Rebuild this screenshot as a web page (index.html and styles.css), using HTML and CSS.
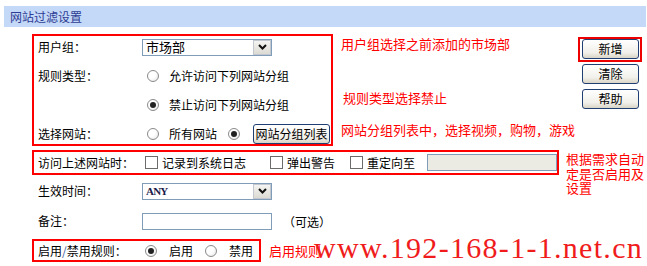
FILE: index.html
```html
<!DOCTYPE html>
<html lang="zh-CN">
<head>
  <meta charset="UTF-8">
  <title>网站过滤设置</title>
  <link rel="stylesheet" href="styles.css">
</head>
<body>

  <div class="title">网站过滤设置</div>

  <div class="page">

    <!-- 用户组 / 规则类型 / 选择网站 -->
    <div class="top">
      <div class="box box-main">
        <div class="row">
          <span class="label">用户组：</span>
          <div class="select">
            <span class="select-text">市场部</span>
            <span class="select-btn"><svg width="9" height="6" viewBox="0 0 9 6"><path d="M1 1 L4.5 4.5 L8 1" fill="none" stroke="#111" stroke-width="2"/></svg></span>
          </div>
        </div>
        <div class="row">
          <span class="label">规则类型：</span>
          <input class="radio" type="radio" name="rule">
          <span class="opt-text">允许访问下列网站分组</span>
        </div>
        <div class="row">
          <span class="label"></span>
          <input class="radio" type="radio" name="rule" checked>
          <span class="opt-text">禁止访问下列网站分组</span>
        </div>
        <div class="row">
          <span class="label">选择网站：</span>
          <input class="radio" type="radio" name="site">
          <span class="opt-text">所有网站</span>
          <input class="radio radio-2" type="radio" name="site" checked>
          <button class="btn btn-list">网站分组列表</button>
        </div>
      </div>

      <div class="notes">
        <p class="note note-1">用户组选择之前添加的市场部</p>
        <p class="note note-2">规则类型选择禁止</p>
        <p class="note note-3">网站分组列表中，选择视频，购物，游戏</p>
      </div>

      <div class="actions">
        <div class="mark"><button class="btn">新增</button></div>
        <button class="btn btn-side">清除</button>
        <button class="btn btn-side">帮助</button>
      </div>
    </div>

    <!-- 访问上述网站时 / 生效时间 / 备注 -->
    <div class="mid">
      <div class="mid-left">
        <div class="box box-visit">
          <span class="label">访问上述网站时：</span>
          <span class="check cb-1"></span><span class="cb-text">记录到系统日志</span>
          <span class="check cb-2"></span><span class="cb-text">弹出警告</span>
          <span class="check cb-3"></span><span class="cb-text">重定向至</span>
          <span class="input input-off"></span>
        </div>
        <div class="row row-time">
          <span class="label">生效时间：</span>
          <div class="select">
            <span class="select-text any">ANY</span>
            <span class="select-btn"><svg width="9" height="6" viewBox="0 0 9 6"><path d="M1 1 L4.5 4.5 L8 1" fill="none" stroke="#111" stroke-width="2"/></svg></span>
          </div>
        </div>
        <div class="row row-note">
          <span class="label">备注：</span>
          <span class="input"></span>
          <span class="optional">（可选）</span>
        </div>
      </div>
      <p class="note note-side">根据需求自动定是否启用及设置</p>
    </div>

    <!-- 启用/禁用规则 -->
    <div class="bottom">
      <div class="box box-enable">
        <span class="label">启用<span class="slash">/</span>禁用规则：</span>
        <input class="radio radio-on" type="radio" name="enable" checked>
        <span class="opt-text">启用</span>
        <input class="radio radio-off" type="radio" name="enable">
        <span class="opt-text">禁用</span>
      </div>
      <p class="note note-enable">启用规则</p>
    </div>
  </div>

  <div class="watermark">www.192-168-1-1.net.cn</div>

</body>
</html>
```

FILE: styles.css
```css
body {
  margin: 0;
  padding: 0;
  position: relative;
  font-family: "Noto Sans CJK SC", "Liberation Sans", sans-serif;
  font-size: 12px;
  color: #000;
  background: #fff;
}
p {
  margin: 0;
}
.title {
  margin: 6px 1px 0 4px;
  height: 21px;
  line-height: 21px;
  padding-left: 6px;
  background: #c4d8f7;
  color: #2d3c94;
}
.page {
  padding-left: 32px;
}
.box {
  box-sizing: border-box;
  border: 2px solid #f00;
}
.label {
  display: inline-block;
  width: 104px;
  flex: none;
  line-height: 14px;
}
.row {
  display: flex;
  align-items: center;
  height: 20px;
}

/* top block */
.top {
  display: flex;
  align-items: flex-start;
  margin-top: 7px;
}
.box-main {
  width: 301px;
  height: 112px;
  padding: 1px 0 0 4px;
  display: flex;
  flex-direction: column;
  gap: 9px;
}
.select {
  position: relative;
  box-sizing: border-box;
  width: 130px;
  height: 17px;
  border: 1px solid #7f9db9;
  background: #fff;
  display: flex;
  align-items: center;
}
.select-text {
  padding-left: 3px;
  line-height: 14px;
  font-size: 13px;
}
.select-text.any {
  font-family: "Liberation Serif", serif;
  font-weight: bold;
  font-size: 11px;
  letter-spacing: -0.8px;
  color: #1a1a4a;
}
.select-btn {
  position: absolute;
  right: 0;
  top: 0;
  box-sizing: border-box;
  width: 18px;
  height: 15px;
  border: 1px solid #c3c7cf;
  background: linear-gradient(#f4f4f2, #dcdad3);
  display: flex;
  align-items: center;
  justify-content: center;
}
.radio {
  appearance: none;
  -webkit-appearance: none;
  box-sizing: border-box;
  width: 12px;
  height: 12px;
  margin: 0 10px 0 5px;
  border: 1px solid #8a8a8a;
  border-radius: 50%;
  background: radial-gradient(circle at 35% 35%, #fff 40%, #e2e2e2);
  flex: none;
  position: relative;
}
.radio:checked::after {
  content: "";
  position: absolute;
  left: 2px;
  top: 2px;
  width: 6px;
  height: 6px;
  border-radius: 50%;
  background: #222;
}
.radio-2 {
  margin: 0 13px 0 11px;
}
.opt-text {
  line-height: 14px;
}
.btn {
  box-sizing: border-box;
  height: 20px;
  padding: 0 2px;
  border: 1px solid #1f3e72;
  border-radius: 3px;
  background: linear-gradient(#ffffff, #f1f0ea 70%, #d9d4c6);
  font-family: "Noto Sans CJK SC", sans-serif;
  font-size: 12px;
  line-height: 16px;
  color: #000;
}
.btn-list {
  width: 77px;
  padding: 0;
}
.notes {
  margin-left: 8px;
  display: flex;
  flex-direction: column;
  color: #f00;
}
.note {
  color: #f00;
  font-size: 13px;
  line-height: 16px;
}
.note-1 {
  margin-top: 2px;
}
.note-2 {
  margin: 38px 0 0 2px;
}
.note-3 {
  margin-top: 16px;
}
.actions {
  margin: 3px 5px 0 auto;
  display: flex;
  flex-direction: column;
  align-items: flex-start;
}
.mark {
  border: 2px solid #e00;
  padding: 0 1px 1px 2px;
}
.actions .btn {
  width: 57px;
}
.btn-side {
  margin: 2px 0 0 4px;
}
.btn-side + .btn-side {
  margin-top: 5px;
}

/* middle block */
.mid {
  display: flex;
  align-items: flex-start;
  margin-top: 4px;
}
.box-visit {
  width: 527px;
  height: 25px;
  padding-left: 4px;
  display: flex;
  align-items: center;
}
.check {
  box-sizing: border-box;
  width: 13px;
  height: 13px;
  border: 1px solid #6c6c6c;
  background: #fff;
  flex: none;
}
.cb-1 {
  margin-left: 3px;
}
.cb-2 {
  margin-left: 24px;
}
.cb-3 {
  margin-left: 15px;
}
.cb-text {
  margin-left: 4px;
  line-height: 14px;
}
.input {
  box-sizing: border-box;
  display: inline-block;
  width: 130px;
  height: 17px;
  border: 1px solid #7f9db9;
  background: #fff;
  flex: none;
}
.input-off {
  margin-left: 12px;
  background: #ebeae3;
}
.row-time {
  margin-top: 6px;
  padding-left: 6px;
}
.row-note {
  margin-top: 10px;
  padding-left: 6px;
}
.optional {
  margin-left: 11px;
}
.note-side {
  width: 80px;
  margin: 2px 0 0 7px;
  line-height: 14.5px;
}

/* bottom block */
.bottom {
  display: flex;
  align-items: center;
  margin-top: 8px;
}
.box-enable {
  width: 229px;
  height: 23px;
  padding-left: 4px;
  display: flex;
  align-items: center;
}
.slash {
  color: #3d5c9c;
}
.radio-on {
  margin: 0 12px 0 3px;
}
.radio-off {
  margin: 0 12px 0 12px;
}
.note-enable {
  margin-left: 8px;
}
.watermark {
  position: absolute;
  left: 314px;
  top: 233px;
  font-family: "Liberation Serif", serif;
  font-size: 30px;
  line-height: 30px;
  letter-spacing: 1.3px;
  color: #f01c1c;
  white-space: nowrap;
}
```
